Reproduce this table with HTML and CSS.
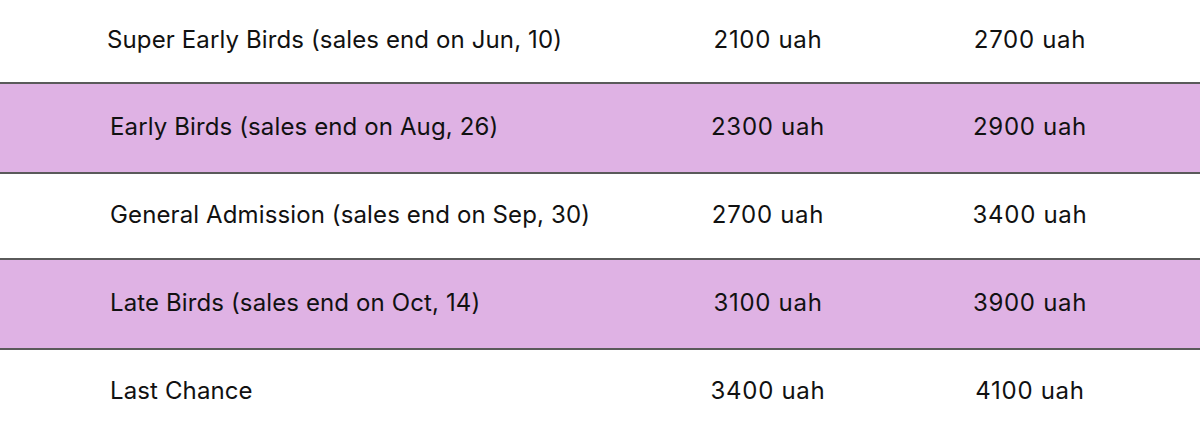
FILE: index.html
```html
<!DOCTYPE html>
<html lang="en">
<head>
<meta charset="utf-8">
<title>Ticket prices</title>
<link rel="stylesheet" href="styles.css">
</head>
<body>
<div class="table">
  <div class="row row-first">
    <div class="name name-first">Super Early Birds (sales end on Jun, 10)</div>
    <div class="price">2100 uah</div>
    <div class="price">2700 uah</div>
  </div>
  <div class="row row-alt">
    <div class="name">Early Birds (sales end on Aug, 26)</div>
    <div class="price">2300 uah</div>
    <div class="price">2900 uah</div>
  </div>
  <div class="row row-mid">
    <div class="name">General Admission (sales end on Sep, 30)</div>
    <div class="price">2700 uah</div>
    <div class="price">3400 uah</div>
  </div>
  <div class="row row-alt">
    <div class="name">Late Birds (sales end on Oct, 14)</div>
    <div class="price">3100 uah</div>
    <div class="price">3900 uah</div>
  </div>
  <div class="row row-last">
    <div class="name">Last Chance</div>
    <div class="price">3400 uah</div>
    <div class="price">4100 uah</div>
  </div>
</div>
</body>
</html>
```
FILE: styles.css
```css
html, body {
  margin: 0;
  padding: 0;
  background: #ffffff;
}
body {
  width: 1200px;
  height: 448px;
  overflow: hidden;
  font-family: "Inter", "Liberation Sans", Arial, sans-serif;
  font-size: 24px;
  color: #111111;
}
.table {
  display: flex;
  flex-direction: column;
}
.row {
  display: grid;
  grid-template-columns: 668px 200px 324px;
  align-items: center;
  border-bottom: 2px solid #5a5a5a;
  background: #ffffff;
  padding-bottom: 3px;
  box-sizing: border-box;
}
.row-first { height: 84px; }
.row-alt { height: 90px; background: #dfb2e4; }
.row-mid { height: 86px; }
.row-last { height: 84px; border-bottom: none; }
.name {
  padding-left: 110px;
  letter-spacing: 0.12px;
}
.name-first {
  padding-left: 107px;
}
.price {
  text-align: center;
  letter-spacing: 0.7px;
}
```
